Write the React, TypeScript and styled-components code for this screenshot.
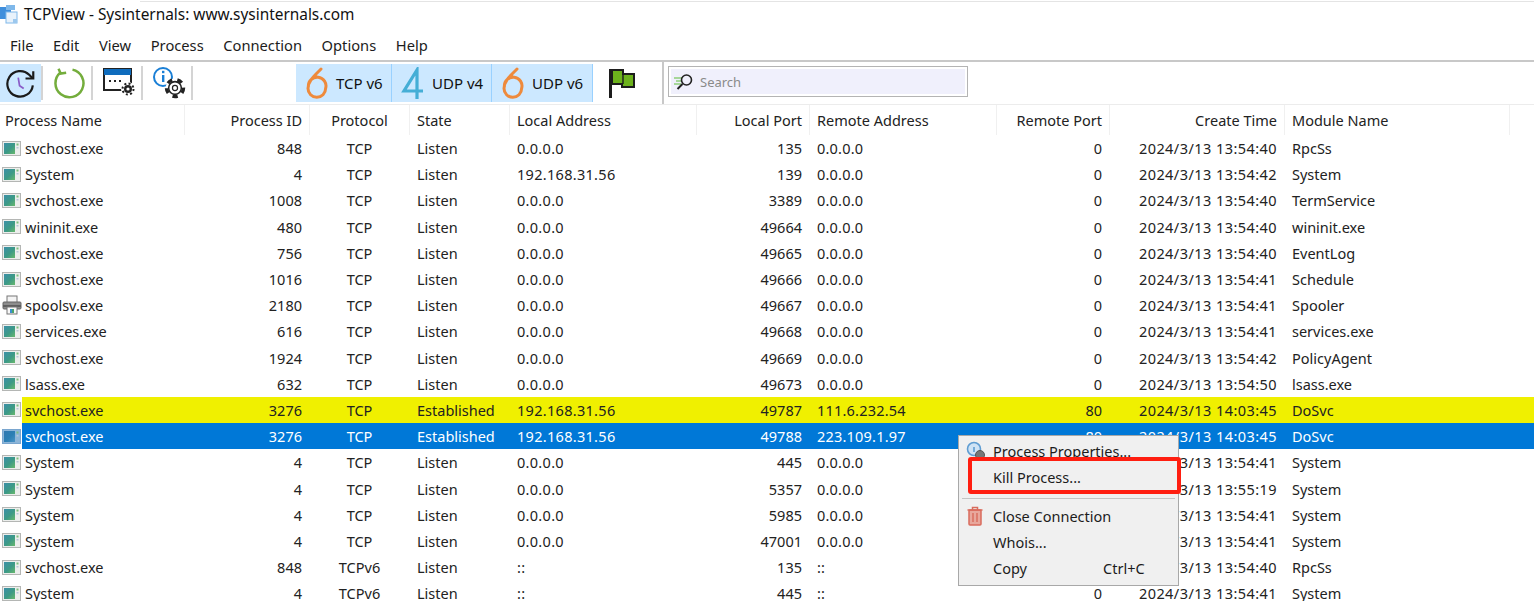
import React from 'react';
import styled, { createGlobalStyle } from 'styled-components';

const GlobalStyle = createGlobalStyle`
  html, body {
    margin: 0;
    padding: 0;
    background: #fff;
    overflow: hidden;
  }
  body {
    font-family: 'Noto Sans', 'Open Sans', sans-serif;
    font-size: 14.5px;
    color: #1c1c1c;
  }
`;

const COLS = '185px 125px 100px 100px 187px 113px 187px 113px 175px 225px 1fr';

const Window = styled.div`
  position: relative;
  width: 1534px;
  height: 601px;
  overflow: hidden;
`;

const TitleBar = styled.div`
  position: relative;
  height: 28px;
  display: flex;
  align-items: center;
  gap: 4px;
  font-size: 15.4px;
  color: #111;
  &::before {
    content: '';
    position: absolute;
    left: 140px;
    right: 0;
    top: 1px;
    height: 1px;
    background: #e4e4e4;
  }
`;

const MenuBar = styled.div`
  height: 30px;
  margin-top: 2px;
  display: flex;
  align-items: center;
  padding: 0 0 1px 10px;
  box-sizing: border-box;
  gap: 19.6px;
  font-size: 14.7px;
`;

const MenuRule = styled.div`
  height: 2px;
  background: #c8c8c8;
`;

const Toolbar = styled.div`
  height: 42px;
  display: flex;
  align-items: center;
  border-bottom: 1px solid #ececec;
`;

const ToolButton = styled.div<{ $active?: boolean }>`
  width: 41px;
  height: 38px;
  display: flex;
  align-items: center;
  justify-content: center;
  box-sizing: border-box;
  padding-right: ${({ $active }) => ($active ? 0 : 3)}px;
  background: ${({ $active }) => ($active ? '#cce8ff' : 'transparent')};
`;

const Sep = styled.div`
  width: 2px;
  height: 34px;
  background: #d4d4d4;
  margin-right: 7px;
`;

const ToggleGroup = styled.div`
  display: flex;
  margin-left: 96px;
  height: 38px;
`;

const Toggle = styled.div<{ $w: number }>`
  width: ${({ $w }) => $w}px;
  display: flex;
  align-items: center;
  gap: 7px;
  padding-left: 9px;
  box-sizing: border-box;
  font-size: 15px;
  background: #cce8ff;
  border-right: 1px solid #99d1ff;
  color: #111;
`;

const FlagButton = styled.div`
  width: 69px;
  height: 38px;
  display: flex;
  align-items: center;
  padding-left: 16px;
  box-sizing: border-box;
`;

const VLine = styled.div`
  width: 2px;
  height: 42px;
  background: #c8c8c8;
`;

const SearchBox = styled.div`
  width: 300px;
  height: 31px;
  margin-left: 4px;
  margin-bottom: 3px;
  box-sizing: border-box;
  border: 1px solid #b4b4b4;
  outline: 2px solid #fff;
  outline-offset: -3px;
  background: #f0f0fc;
  display: flex;
  align-items: center;
  padding-left: 4px;
  gap: 5px;
  font-size: 13px;
  color: #8a8a8a;
`;

const HeaderRow = styled.div`
  height: 30px;
  display: grid;
  grid-template-columns: ${COLS};
  align-items: center;
`;

const HeadCell = styled.div<{ $align?: string }>`
  height: 100%;
  display: flex;
  align-items: center;
  padding: 0 7px;
  box-sizing: border-box;
  border-right: 1px solid #f0f0f0;
  justify-content: ${({ $align }) => $align || 'flex-start'};
  white-space: nowrap;
  color: #222;
  &:first-child {
    padding-left: 5px;
  }
  &:last-child {
    border-right: 0;
  }
`;

const Row = styled.div`
  height: 26.2px;
  display: grid;
  grid-template-columns: ${COLS};
  align-items: center;
`;

const NameCell = styled.div`
  height: 100%;
  display: flex;
  align-items: center;
`;

const Cell = styled.div<{ $align?: string; $tone?: string; $spaced?: number }>`
  height: 100%;
  display: flex;
  align-items: center;
  padding: 0 8px 0 7px;
  box-sizing: border-box;
  white-space: nowrap;
  letter-spacing: ${({ $spaced }) => $spaced || 0}px;
  justify-content: ${({ $align }) => $align || 'flex-start'};
  background: ${({ $tone }) =>
    $tone === 'yellow' ? '#f0f000' : $tone === 'blue' ? '#0078d7' : 'transparent'};
  color: ${({ $tone }) => ($tone === 'blue' ? '#fff' : '#222')};
  &:last-child {
    grid-column: 10 / -1;
  }
`;

const IconSlot = styled.div`
  width: 22px;
  height: 100%;
  display: flex;
  align-items: center;
  padding-left: 2px;
  box-sizing: border-box;
  flex: none;
`;

const NameText = styled.div<{ $tone?: string }>`
  flex: 1;
  height: 100%;
  display: flex;
  align-items: center;
  padding-left: 3px;
  background: ${({ $tone }) =>
    $tone === 'yellow' ? '#f0f000' : $tone === 'blue' ? '#0078d7' : 'transparent'};
  color: ${({ $tone }) => ($tone === 'blue' ? '#fff' : '#222')};
`;

const Menu = styled.div`
  position: absolute;
  left: 958px;
  top: 435px;
  width: 221px;
  height: 151px;
  box-sizing: border-box;
  background: #f0f0f0;
  border: 1px solid #a8a8a8;
  padding-top: 2px;
`;

const MenuItem = styled.div`
  height: 26px;
  display: flex;
  align-items: center;
  position: relative;
  padding-left: 34px;
  color: #1c1c1c;
`;

const Shortcut = styled.span`
  position: absolute;
  left: 144px;
`;

const MenuIcon = styled.span`
  position: absolute;
  left: 7px;
  top: 3px;
  display: flex;
`;

const MenuSep = styled.div`
  height: 1px;
  margin: 8px 3px 4px;
  background: #c4c4c4;
`;

const RedBox = styled.div`
  position: absolute;
  left: 968px;
  top: 457px;
  width: 213px;
  height: 37px;
  box-sizing: border-box;
  border: 4px solid #ff1e10;
  border-radius: 3px;
`;

const ProcIcon = ({ blue, id }: { blue?: boolean; id: string }) => (
  <svg width="19" height="15" viewBox="0 0 19 15">
    <defs>
      <linearGradient id={id} x1="0" y1="0" x2="1" y2="1">
        <stop offset="0" stopColor={blue ? '#2f77b0' : '#3c8fa8'} />
        <stop offset="0.55" stopColor={blue ? '#2c7fb4' : '#3d9a86'} />
        <stop offset="1" stopColor={blue ? '#4b93c6' : '#68b86c'} />
      </linearGradient>
    </defs>
    <rect x="0.5" y="0.5" width="18" height="14" fill={blue ? '#8db5d8' : '#eceeec'} stroke={blue ? '#7aa6cf' : '#b4b6b4'} />
    <rect x="2" y="2" width="11" height="11" fill={`url(#${id})`} />
    <rect x="14.5" y="2.5" width="2" height="2" fill="#7cbf7c" />
    <rect x="14.5" y="6" width="2" height="1.5" fill="#b6c6d8" />
  </svg>
);

const PrinterIcon = () => (
  <svg width="20" height="20" viewBox="0 0 20 20">
    <rect x="5" y="1" width="10" height="7" fill="#f4f4f4" stroke="#777" />
    <rect x="1" y="7" width="18" height="7" rx="1" fill="#8d8d8d" stroke="#666" />
    <rect x="1" y="10" width="18" height="2" fill="#5f5f5f" />
    <rect x="5" y="12" width="10" height="7" fill="#f8f8f8" stroke="#777" />
    <rect x="8" y="14" width="2" height="4" fill="#3a8fd0" />
    <rect x="10" y="14" width="2" height="4" fill="#4aa36a" />
  </svg>
);

const AppLogo = () => (
  <svg width="20" height="24" viewBox="0 0 20 24">
    <rect x="0" y="5" width="11" height="12" fill="#3f8fdc" />
    <rect x="6" y="3" width="9" height="5" fill="#7fb8ea" />
    <rect x="6" y="10" width="11" height="11" fill="#e8f2fb" stroke="#7fb8ea" />
    <rect x="13" y="17" width="4" height="4" fill="#9cc8ee" />
  </svg>
);

const ClockIcon = () => (
  <svg width="31" height="31" viewBox="0 0 34 34" fill="none">
    <path d="M30.5 19A14 14 0 1 1 26.5 7.5L30 11" stroke="#1a1a1a" strokeWidth="2.4" />
    <path d="M31 3.5V11.5H22.5" stroke="#1a1a1a" strokeWidth="2.4" />
    <path d="M14.5 10.5l1.5 9 4.5 3" stroke="#8a5cc8" strokeWidth="1.9" />
  </svg>
);

const RefreshIcon = () => (
  <svg width="32" height="32" viewBox="0 0 32 32" fill="none">
    <path d="M19.5 2.6A14 14 0 1 1 7.5 5.5" stroke="#74ad3c" strokeWidth="2.5" />
    <path d="M6 1.5L7.5 6.5L13 6.5" stroke="#74ad3c" strokeWidth="2.5" transform="rotate(-8 8 5)" />
  </svg>
);

const Gear = ({ x, y, r }: { x: number; y: number; r: number }) => (
  <g transform={`translate(${x} ${y})`}>
    <circle r={r} fill="none" stroke="#222" strokeWidth={r * 0.4} strokeDasharray={`${r * 0.62} ${r * 0.62}`} />
    <circle r={r * 0.75} fill="#fff" stroke="#222" strokeWidth="1.6" />
    <circle r={r * 0.3} fill="#fff" stroke="#222" strokeWidth="1.2" />
  </g>
);

const WindowGearIcon = () => (
  <svg width="34" height="32" viewBox="0 0 34 32" fill="none">
    <rect x="2" y="2" width="27" height="21" fill="#fff" stroke="#222" strokeWidth="2" />
    <rect x="2" y="2" width="27" height="6" fill="#0f6cbd" />
    <rect x="7" y="13" width="2" height="2" fill="#222" />
    <rect x="12" y="13" width="2" height="2" fill="#222" />
    <rect x="17" y="13" width="2" height="2" fill="#222" />
    <circle cx="26" cy="22" r="7" fill="#fff" />
    <circle cx="26" cy="22" r="4" fill="#222" />
    <circle cx="26" cy="22" r="5.5" stroke="#222" strokeWidth="2" strokeDasharray="2 2.3" />
    <circle cx="26" cy="22" r="1.6" fill="#fff" />
  </svg>
);

const InfoGearIcon = () => (
  <svg width="34" height="34" viewBox="0 0 34 34" fill="none">
    <circle cx="11" cy="11" r="9" stroke="#1a7fd6" strokeWidth="2" fill="#fff" />
    <rect x="10" y="9" width="2.4" height="7" fill="#1a7fd6" />
    <rect x="10" y="4.8" width="2.4" height="2.4" fill="#1a7fd6" />
    <circle cx="23" cy="22" r="9.5" fill="#fff" />
    <Gear x={23} y={22} r={8.5} />
  </svg>
);

const Six = () => (
  <svg width="24" height="32" viewBox="0 0 24 32" fill="none">
    <path d="M16 2C9 9 3 14 3 21.5a8.8 8.8 0 1 0 17.6 0a8.8 8.8 0 1 0-17.2-2" stroke="#ee8a3c" strokeWidth="3" strokeLinecap="round" />
  </svg>
);

const Four = () => (
  <svg width="24" height="32" viewBox="0 0 24 32" fill="none">
    <path d="M16 32V3L3 24h19" stroke="#45aed6" strokeWidth="3.2" />
  </svg>
);

const FlagIcon = () => (
  <svg width="27" height="30" viewBox="0 0 27 30">
    <rect x="0" y="1" width="3" height="29" fill="#1c1c1c" />
    <path d="M3 2h11v4h11v13H13v-3H3z" fill="#6cb21c" stroke="#1c1c1c" strokeWidth="2" />
    <path d="M14 6v10" stroke="#1c1c1c" strokeWidth="1.4" />
  </svg>
);

const SearchIcon = () => (
  <svg width="22" height="20" viewBox="0 0 22 20" fill="none">
    <path d="M1 6h8M3 9h6M1 12h7" stroke="#a6d79a" strokeWidth="2" />
    <circle cx="13.5" cy="8" r="5" stroke="#222" strokeWidth="1.6" fill="#f0f0fc" />
    <path d="M9.5 12l-5 5" stroke="#222" strokeWidth="2" />
  </svg>
);

const TrashIcon = () => (
  <svg width="18" height="20" viewBox="0 0 18 20" fill="none">
    <rect x="3" y="4" width="12" height="15" rx="1" fill="#e8a79c" stroke="#d96b5c" strokeWidth="1.5" />
    <path d="M1.5 4h15M6.5 4V1.5h5V4" stroke="#d96b5c" strokeWidth="1.5" />
    <path d="M7 7v9M11 7v9" stroke="#d96b5c" strokeWidth="1.4" />
  </svg>
);

const PropsIcon = () => (
  <svg width="20" height="20" viewBox="0 0 20 20" fill="none">
    <circle cx="8" cy="8" r="6.5" fill="#cfe3f5" stroke="#5f9dd2" strokeWidth="1.6" />
    <rect x="7.2" y="6" width="1.6" height="5" fill="#5f9dd2" />
    <circle cx="14" cy="14" r="4.5" fill="#777" stroke="#555" />
  </svg>
);

type Conn = {
  name: string;
  pid: number;
  proto: string;
  state: string;
  local: string;
  port: number;
  remote: string;
  rport: number;
  time: string;
  module: string;
  tone?: string;
  printer?: boolean;
};

const base = (
  name: string,
  pid: number,
  local: string,
  port: number,
  time: string,
  module: string,
): Conn => ({
  name,
  pid,
  proto: 'TCP',
  state: 'Listen',
  local,
  port,
  remote: '0.0.0.0',
  rport: 0,
  time: `2024/3/13 ${time}`,
  module,
});

const rows: Conn[] = [
  base('svchost.exe', 848, '0.0.0.0', 135, '13:54:40', 'RpcSs'),
  base('System', 4, '192.168.31.56', 139, '13:54:42', 'System'),
  base('svchost.exe', 1008, '0.0.0.0', 3389, '13:54:40', 'TermService'),
  base('wininit.exe', 480, '0.0.0.0', 49664, '13:54:40', 'wininit.exe'),
  base('svchost.exe', 756, '0.0.0.0', 49665, '13:54:40', 'EventLog'),
  base('svchost.exe', 1016, '0.0.0.0', 49666, '13:54:41', 'Schedule'),
  { ...base('spoolsv.exe', 2180, '0.0.0.0', 49667, '13:54:41', 'Spooler'), printer: true },
  base('services.exe', 616, '0.0.0.0', 49668, '13:54:41', 'services.exe'),
  base('svchost.exe', 1924, '0.0.0.0', 49669, '13:54:42', 'PolicyAgent'),
  base('lsass.exe', 632, '0.0.0.0', 49673, '13:54:50', 'lsass.exe'),
  {
    ...base('svchost.exe', 3276, '192.168.31.56', 49787, '14:03:45', 'DoSvc'),
    state: 'Established',
    remote: '111.6.232.54',
    rport: 80,
    tone: 'yellow',
  },
  {
    ...base('svchost.exe', 3276, '192.168.31.56', 49788, '14:03:45', 'DoSvc'),
    state: 'Established',
    remote: '223.109.1.97',
    rport: 80,
    tone: 'blue',
  },
  base('System', 4, '0.0.0.0', 445, '13:54:41', 'System'),
  base('System', 4, '0.0.0.0', 5357, '13:55:19', 'System'),
  base('System', 4, '0.0.0.0', 5985, '13:54:41', 'System'),
  base('System', 4, '0.0.0.0', 47001, '13:54:41', 'System'),
  { ...base('svchost.exe', 848, '::', 135, '13:54:40', 'RpcSs'), proto: 'TCPv6', remote: '::' },
  { ...base('System', 4, '::', 445, '13:54:41', 'System'), proto: 'TCPv6', remote: '::' },
];

const menuNames = ['File', 'Edit', 'View', 'Process', 'Connection', 'Options', 'Help'];

export default function App() {
  return (
    <Window>
      <GlobalStyle />
      <TitleBar>
        <AppLogo />
        <span>TCPView - Sysinternals: www.sysinternals.com</span>
      </TitleBar>
      <MenuBar>
        {menuNames.map((m) => (
          <span key={m}>{m}</span>
        ))}
      </MenuBar>
      <MenuRule />
      <Toolbar>
        <ToolButton $active>
          <ClockIcon />
        </ToolButton>
        <Sep />
        <ToolButton>
          <RefreshIcon />
        </ToolButton>
        <Sep />
        <ToolButton>
          <WindowGearIcon />
        </ToolButton>
        <Sep />
        <ToolButton>
          <InfoGearIcon />
        </ToolButton>
        <Sep />
        <ToggleGroup>
          <Toggle $w={96}>
            <Six />
            TCP v6
          </Toggle>
          <Toggle $w={100}>
            <Four />
            UDP v4
          </Toggle>
          <Toggle $w={101}>
            <Six />
            UDP v6
          </Toggle>
        </ToggleGroup>
        <FlagButton>
          <FlagIcon />
        </FlagButton>
        <VLine />
        <SearchBox>
          <SearchIcon />
          Search
        </SearchBox>
      </Toolbar>
      <HeaderRow>
        <HeadCell>Process Name</HeadCell>
        <HeadCell $align="flex-end">Process ID</HeadCell>
        <HeadCell $align="center">Protocol</HeadCell>
        <HeadCell>State</HeadCell>
        <HeadCell>Local Address</HeadCell>
        <HeadCell $align="flex-end">Local Port</HeadCell>
        <HeadCell>Remote Address</HeadCell>
        <HeadCell $align="flex-end">Remote Port</HeadCell>
        <HeadCell $align="flex-end">Create Time</HeadCell>
        <HeadCell>Module Name</HeadCell>
        <HeadCell />
      </HeaderRow>
      {rows.map((r, i) => (
        <Row key={i}>
          <NameCell>
            <IconSlot>
              {r.printer ? <PrinterIcon /> : <ProcIcon id={`proc-${i}`} blue={r.tone === 'blue'} />}
            </IconSlot>
            <NameText $tone={r.tone}>{r.name}</NameText>
          </NameCell>
          <Cell $tone={r.tone} $align="flex-end">{r.pid}</Cell>
          <Cell $tone={r.tone} $align="center">{r.proto}</Cell>
          <Cell $tone={r.tone}>{r.state}</Cell>
          <Cell $tone={r.tone} $spaced={0.3}>{r.local}</Cell>
          <Cell $tone={r.tone} $align="flex-end">{r.port}</Cell>
          <Cell $tone={r.tone} $spaced={0.2}>{r.remote}</Cell>
          <Cell $tone={r.tone} $align="flex-end">{r.rport}</Cell>
          <Cell $tone={r.tone} $align="flex-end" $spaced={0.44}>{r.time}</Cell>
          <Cell $tone={r.tone}>{r.module}</Cell>
        </Row>
      ))}
      <Menu>
        <MenuItem>
          <MenuIcon>
            <PropsIcon />
          </MenuIcon>
          Process Properties...
        </MenuItem>
        <MenuItem>Kill Process...</MenuItem>
        <MenuSep />
        <MenuItem>
          <MenuIcon>
            <TrashIcon />
          </MenuIcon>
          Close Connection
        </MenuItem>
        <MenuItem>Whois...</MenuItem>
        <MenuItem>
          Copy
          <Shortcut>Ctrl+C</Shortcut>
        </MenuItem>
      </Menu>
      <RedBox />
    </Window>
  );
}
